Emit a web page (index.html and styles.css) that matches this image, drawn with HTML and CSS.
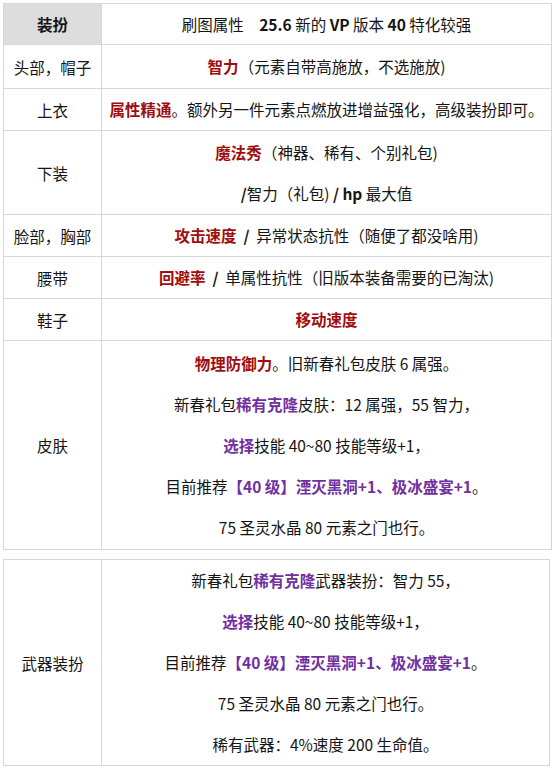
FILE: index.html
```html
<!DOCTYPE html>
<html lang="zh-CN">
<head>
<meta charset="utf-8">
<title>装扮</title>
<link rel="stylesheet" href="styles.css">
</head>
<body>
<table class="gear first">
  <colgroup><col class="c-key"><col class="c-val"></colgroup>
  <tr>
    <th class="key head">装扮</th>
    <td class="val short"><p>刷图属性　<b>25.6</b> 新的 <b>VP</b> 版本 <b>40</b> 特化较强</p></td>
  </tr>
  <tr>
    <td class="key">头部，帽子</td>
    <td class="val tall"><p><b class="red">智力</b>（元素自带高施放，不选施放)</p></td>
  </tr>
  <tr>
    <td class="key">上衣</td>
    <td class="val"><p><b class="red">属性精通</b>。额外另一件元素点燃放进增益强化，高级装扮即可。</p></td>
  </tr>
  <tr>
    <td class="key">下装</td>
    <td class="val pair">
      <p><b class="red">魔法秀</b>（神器、稀有、个别礼包)</p>
      <p><b>/</b>智力（礼包) <b>/ hp</b> 最大值</p>
    </td>
  </tr>
  <tr>
    <td class="key">脸部，胸部</td>
    <td class="val"><p><b class="red">攻击速度</b>&nbsp; <b>/</b>&nbsp; 异常状态抗性（随便了都没啥用)</p></td>
  </tr>
  <tr>
    <td class="key">腰带</td>
    <td class="val"><p><b class="red">回避率</b>&nbsp; <b>/</b>&nbsp; 单属性抗性（旧版本装备需要的已淘汰)</p></td>
  </tr>
  <tr>
    <td class="key">鞋子</td>
    <td class="val"><p><b class="red">移动速度</b></p></td>
  </tr>
  <tr>
    <td class="key">皮肤</td>
    <td class="val multi">
      <p><b class="red">物理防御力</b>。旧新春礼包皮肤 6 属强。</p>
      <p>新春礼包<b class="purple">稀有克隆</b>皮肤：12 属强，55 智力，</p>
      <p><b class="purple">选择</b>技能 40~80 技能等级+1，</p>
      <p>目前推荐<b class="purple">【40 级】湮灭黑洞+1、极冰盛宴+1</b>。</p>
      <p>75 圣灵水晶 80 元素之门也行。</p>
    </td>
  </tr>
</table>
<table class="gear second">
  <colgroup><col class="c-key"><col class="c-val"></colgroup>
  <tr>
    <td class="key">武器装扮</td>
    <td class="val">
      <p>新春礼包<b class="purple">稀有克隆</b>武器装扮：智力 55，</p>
      <p><b class="purple">选择</b>技能 40~80 技能等级+1，</p>
      <p>目前推荐<b class="purple">【40 级】湮灭黑洞+1、极冰盛宴+1</b>。</p>
      <p>75 圣灵水晶 80 元素之门也行。</p>
      <p>稀有武器：4%速度 200 生命值。</p>
    </td>
  </tr>
</table>
</body>
</html>
```

FILE: styles.css
```css
html, body {
  margin: 0;
  padding: 0;
  background: #ffffff;
}

body {
  padding: 3px 3px 0 3px;
  font-family: "Noto Sans CJK SC", "Noto Sans", sans-serif;
  font-size: 15.5px;
  color: #141414;
}

.gear {
  border-collapse: collapse;
  table-layout: fixed;
  border: 1px solid #d6d6d6;
}

.first {
  width: 549px;
}

.second {
  width: 547px;
  margin-top: 9px;
}

.c-key {
  width: 98px;
}

.gear th,
.gear td {
  border: 1px solid #d6d6d6;
  padding: 0 5px;
  vertical-align: middle;
  text-align: center;
}

.key {
  font-weight: normal;
}

.head {
  background: #dddddd;
  font-weight: bold;
}

.val p {
  margin: 0;
  padding: 10px 0;
  line-height: 21px;
  white-space: nowrap;
}

.short p {
  line-height: 20px;
}

.gear td.tall {
  padding-top: 1px;
  padding-bottom: 1px;
}

.gear td.pair {
  padding-top: 0.5px;
  padding-bottom: 0.5px;
}

.gear td.multi {
  padding-top: 1.5px;
  padding-bottom: 1.5px;
}

.val b {
  font-weight: bold;
}

.red {
  color: #a00d0d;
}

.purple {
  color: #7030a0;
}
```
